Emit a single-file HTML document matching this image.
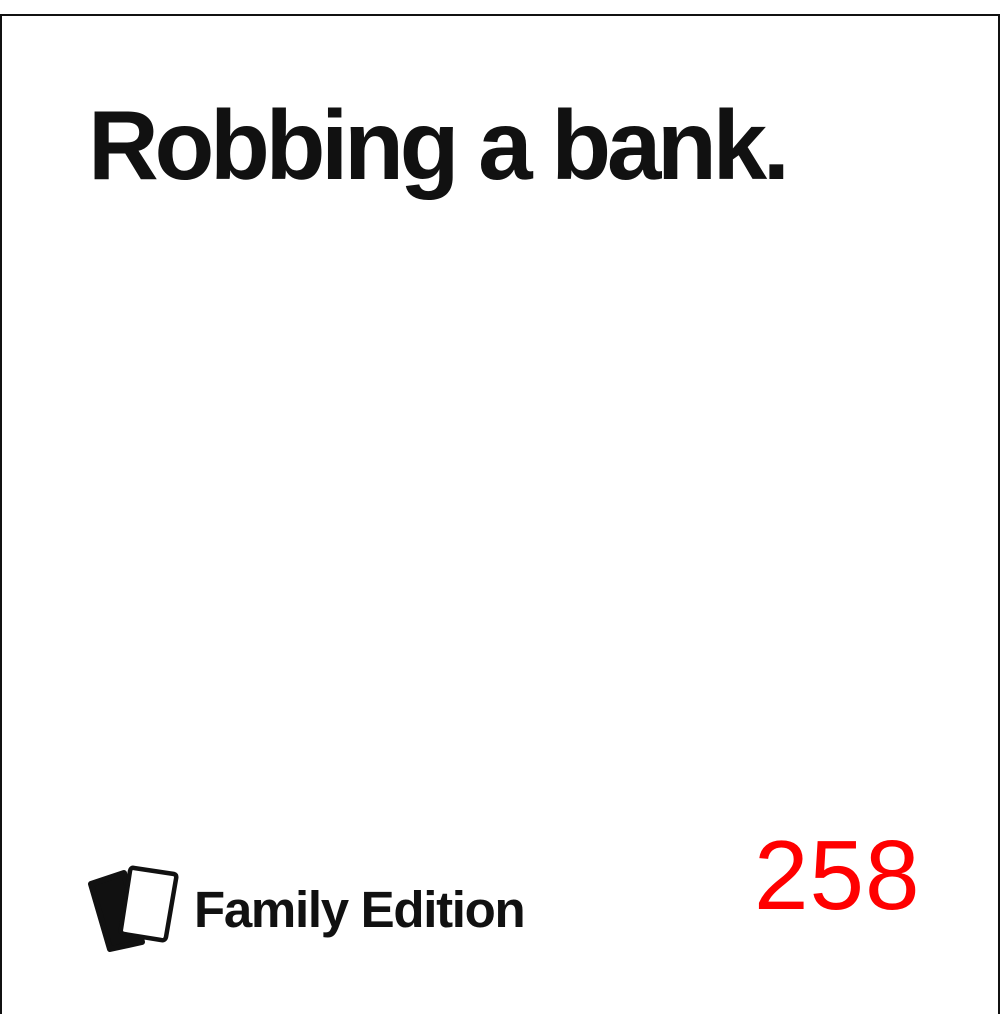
<!DOCTYPE html>
<html><head><style>
html,body{margin:0;padding:0;background:#fff;}
body{width:1000px;height:1005px;position:relative;overflow:hidden;}
.frame{position:absolute;left:0;top:14px;width:1000px;height:1000px;border:2px solid #111;border-bottom:none;box-sizing:border-box;}
.title{position:absolute;left:88px;top:96px;font:bold 98px/1 "Liberation Sans",sans-serif;letter-spacing:-4.3px;color:#111;white-space:nowrap;}
.fam{position:absolute;left:194px;top:884px;font:bold 51px/1 "Liberation Sans",sans-serif;letter-spacing:-1.3px;color:#111;white-space:nowrap;}
.num{position:absolute;left:754px;top:826px;font:98px/1 "Liberation Sans",sans-serif;color:#f00;letter-spacing:1px;}
</style></head><body>
<div class="frame"></div>
<div class="title">Robbing a bank.</div>
<svg style="position:absolute;left:84px;top:860px" width="100" height="95" viewBox="0 0 100 95">
<path d="M7 24 L40 13 L58 82 L26 89 Z" fill="#111" stroke="#111" stroke-width="6" stroke-linejoin="round"/>
<path d="M50 8 L90 14 Q93 15 92 19 L82 77 Q81 81 77 80 L40 74 Q36 73 37 69 L46 11 Q47 7 50 8 Z" fill="#fff" stroke="#111" stroke-width="4.5" stroke-linejoin="round"/>
</svg>
<div class="fam">Family Edition</div>
<div class="num">258</div>
</body></html>
